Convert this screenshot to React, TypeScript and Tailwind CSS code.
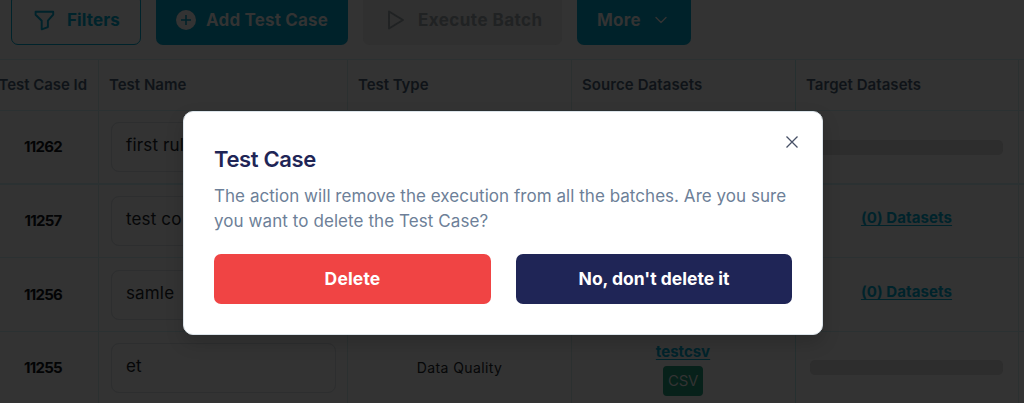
import type { ReactNode } from "react";

type Row = {
  id: string;
  name: string;
  type?: string;
  source?: string;
  target?: string;
  height: string;
  idPad?: string;
  inputPad?: string;
};

const rows: Row[] = [
  { id: "11262", name: "first rule", height: "h-[74px] border-b-2" },
  { id: "11257", name: "test co", target: "(0) Datasets", height: "h-[73px] border-b" },
  { id: "11256", name: "samle", target: "(0) Datasets", height: "h-[74px] border-b", idPad: "pt-[2px]", inputPad: "pt-[12px]" },
  { id: "11255", name: "et", type: "Data Quality", source: "testcsv", height: "h-[72px] border-b", idPad: "pt-[2px]" },
];

const grid = "grid shrink-0 grid-cols-[99px_249px_224px_224px_223px_1fr] border-[#2b3132]";

function HeaderCell({ children, className = "" }: { children?: ReactNode; className?: string }) {
  return (
    <div className={`flex items-center whitespace-nowrap border-r border-[#2b3030] pl-[10px] pt-px ${className}`}>
      {children}
    </div>
  );
}

function Toolbar() {
  return (
    <div className="flex h-[59px] shrink-0 items-start pl-[11px] text-[17px] font-bold">
      <button className="-mt-[6px] flex h-[51px] w-[130px] items-center rounded-[7px] border border-[#00232b] pl-[22px] text-[#00232b]">
        <svg className="mr-3 mt-px size-[21px] shrink-0" viewBox="0 0 21 21" fill="none" stroke="currentColor" strokeWidth="1.9" strokeLinejoin="round">
          <path d="M1.6 1.8h17.6v2.9l-5.3 6v6.4l-6.2 2.2v-8.6l-6.1-6z" />
        </svg>
        <span className="pt-[2px] tracking-[0.13px]">Filters</span>
      </button>
      <button className="-mt-[6px] ml-[15px] flex h-[51px] w-[192px] items-center rounded-[7px] bg-[#00222a] pl-5 text-[#333]">
        <svg className="mr-[10px] mt-px size-5 shrink-0" viewBox="0 0 20 20">
          <circle cx="10" cy="10" r="10" fill="#333333" />
          <path d="M10 5v10M5 10h10" stroke="#00222a" strokeWidth="1.5" />
        </svg>
        <span className="whitespace-nowrap pt-[2px] tracking-[0.18px]">Add Test Case</span>
      </button>
      <button className="-mt-[6px] ml-[15px] flex h-[51px] w-[199px] items-center rounded-[7px] bg-[#303030] pl-[24px] text-[#202223]">
        <svg className="mr-[13px] mt-px h-5 w-[18px] shrink-0" viewBox="0 0 18 20" fill="none" stroke="currentColor" strokeWidth="1.8" strokeLinejoin="round">
          <path d="M2 1.5 16 10 2 18.5z" />
        </svg>
        <span className="whitespace-nowrap pt-[2px] tracking-[0.46px]">Execute Batch</span>
      </button>
      <button className="-mt-[6px] ml-[15px] flex h-[51px] w-[114px] items-center rounded-[7px] bg-[#00222a] pl-5 text-[#333]">
        <span className="pt-[2px] tracking-[0.25px]">More</span>
        <svg className="ml-[14px] h-2 w-3 shrink-0" viewBox="0 0 12 8" fill="none" stroke="currentColor" strokeWidth="1.4" strokeLinecap="round" strokeLinejoin="round">
          <path d="m1 1.5 5 5 5-5" />
        </svg>
      </button>
    </div>
  );
}

function TableRow({ row }: { row: Row }) {
  return (
    <div className={`${grid} ${row.height}`}>
      <div className={`flex items-center justify-center border-r border-[#2b3030] pr-[12px] text-[15px] font-bold tracking-[-0.75px] text-[#030405] ${row.idPad ?? ""}`}>
        {row.id}
      </div>
      <div className={`border-r border-[#2b3030] pl-3 ${row.inputPad ?? "pt-[11px]"}`}>
        <div className="flex h-[50px] w-[225px] items-center rounded-lg border border-[#2d2e2f] pb-[2px] pl-[14px] text-[17px] tracking-[0.15px] text-[#060708]">
          {row.name}
        </div>
      </div>
      <div className="flex items-center justify-center border-r border-[#2b3030] text-[14px] tracking-[0.4px] text-[#060708]">
        {row.type}
      </div>
      <div className="flex flex-col items-center border-r border-[#263030] pr-px pt-[10px]">
        {row.source && (
          <>
            <a className="h-5 text-[15px] font-bold leading-5 text-[#00232b] underline decoration-1 underline-offset-2">{row.source}</a>
            <span className="mt-[4px] flex h-[30px] w-10 items-center justify-center rounded bg-[#07211a] text-[15px] tracking-[-0.3px] text-[#333]">
              CSV
            </span>
          </>
        )}
      </div>
      <div className="flex items-center justify-center border-r border-[#2b3030]">
        {row.target ? (
          <a className="mb-[5px] mr-px text-[15px] font-bold tracking-[0.1px] text-[#00232b] underline decoration-1 underline-offset-2">{row.target}</a>
        ) : (
          <div className="ml-[-1px] h-[15px] w-[193px] rounded-[5px] bg-[#2d2d2d]" />
        )}
      </div>
      <div />
    </div>
  );
}

function DeleteDialog() {
  return (
    <div className="absolute left-[183px] top-[111px] flex h-[224px] w-[640px] flex-col rounded-[10px] border border-[#dce4ea] bg-white px-[30px] shadow-[0_8px_18px_rgba(0,0,0,0.16)]">
      <button className="absolute right-[24px] top-[24px]" aria-label="Close">
        <svg className="size-3" viewBox="0 0 12 12" fill="none" stroke="#475066" strokeWidth="1.3">
          <path d="m.5.5 11 11M11.5.5l-11 11" />
        </svg>
      </button>
      <h2 className="mt-[31px] text-[22px] font-semibold leading-8 tracking-[-0.35px] text-[#1f2556]">Test Case</h2>
      <p className="mt-[9px] whitespace-nowrap text-[17px] leading-[25px] tracking-[0.04px] text-[#6d7f98]">
        The action will remove the execution from all the batches. Are you sure
        <br />
        <span className="tracking-[0.08px]">you want to delete the Test Case?</span>
      </p>
      <div className="mt-5 grid grid-cols-[277px_276px] gap-[25px] text-[17.5px] font-bold text-white">
        <button className="h-[50px] rounded-[7px] bg-[#f04444] tracking-[0.15px]">Delete</button>
        <button className="h-[50px] rounded-[7px] bg-[#1f2556]">No, don't delete it</button>
      </div>
    </div>
  );
}

export default function App() {
  return (
    <div className="relative flex h-[403px] w-[1024px] flex-col overflow-hidden bg-[#333333] font-['Inter',sans-serif]">
      <Toolbar />
      <div className={`${grid} h-[52px] border-y text-[15px] font-semibold text-[#0f1318]`}>
        <HeaderCell className="justify-end pr-[11px] tracking-[-0.05px]">Test Case Id</HeaderCell>
        <HeaderCell>Test Name</HeaderCell>
        <HeaderCell className="tracking-[-0.05px]">Test Type</HeaderCell>
        <HeaderCell className="border-[#263030] tracking-[0.08px]">Source Datasets</HeaderCell>
        <HeaderCell className="tracking-[0.05px]">Target Datasets</HeaderCell>
        <div />
      </div>
      {rows.map((row) => (
        <TableRow key={row.id} row={row} />
      ))}
      <DeleteDialog />
    </div>
  );
}
